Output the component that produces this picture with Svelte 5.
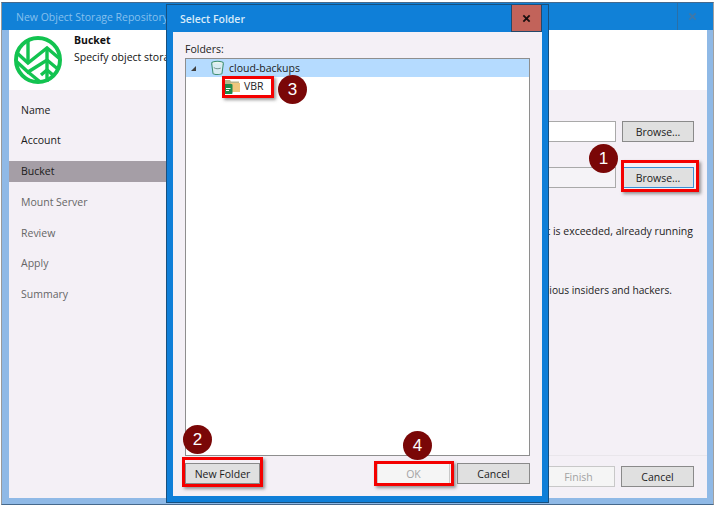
<script>
  const steps = [
    { label: 'Name', done: true },
    { label: 'Account', done: true },
    { label: 'Bucket', done: true, active: true },
    { label: 'Mount Server' },
    { label: 'Review' },
    { label: 'Apply' },
    { label: 'Summary' }
  ];
</script>

<div class="stage">
  <section class="wizard">
    <header class="titlebar">
      <span class="wiz-title">New Object Storage Repository</span>
      <span class="wiz-close">
        <svg viewBox="0 0 10 10" aria-hidden="true"><path d="M1.5 1.5l7 7M8.5 1.5l-7 7" stroke="#3f78a8" stroke-width="2" fill="none" /></svg>
      </span>
    </header>
    <div class="banner">
      <svg class="logo" viewBox="0 0 48 48" aria-hidden="true">
        <circle cx="24" cy="24" r="22" fill="#fff" />
        <g fill="none" stroke="#12c350" stroke-width="3.4">
          <path d="M14 3v24" />
          <path d="M2 16l12 11L33 12l13 11" />
          <path d="M3 26l11 10 19-12 12 10" />
          <path d="M33 12v34" />
          <path d="M14 36l11 9" />
          <path d="M27 39l6-5 6 5" />
        </g>
        <circle cx="24" cy="24" r="22" fill="none" stroke="#12c350" stroke-width="4" />
      </svg>
      <div class="banner-text">
        <strong>Bucket</strong>
        <span>Specify object stora</span>
      </div>
    </div>
    <div class="body">
      <nav class="steps">
        {#each steps as s}
          <div class="step" class:done={s.done} class:active={s.active}>{s.label}</div>
        {/each}
      </nav>
      <div class="panel">
        <div class="row first"><div class="field"></div><button class="btn">Browse...</button></div>
        <div class="row second">
          <div class="field"></div>
          <button class="btn focus">Browse...</button>
        </div>
        <p class="note one">t is exceeded, already running</p>
        <p class="note two">ious insiders and hackers.</p>
        <div class="spacer"></div>
        <footer class="wiz-foot">
          <button class="btn off">Finish</button>
          <button class="btn">Cancel</button>
        </footer>
      </div>
    </div>
  </section>

  <section class="dialog">
    <header class="dlg-bar">
      <span class="dlg-title">Select Folder</span>
      <span class="dlg-close">
        <svg viewBox="0 0 10 10" aria-hidden="true"><path d="M1.5 1.5l7 7M8.5 1.5l-7 7" stroke="#1a0f0f" stroke-width="2" fill="none" /></svg>
      </span>
    </header>
    <div class="dlg-body">
      <div class="dlg-label">Folders:</div>
      <div class="tree">
        <div class="tree-row sel">
          <svg class="caret" viewBox="0 0 6 6" aria-hidden="true"><path d="M6 0v6H0z" fill="#404040" /></svg>
          <svg class="bucket" viewBox="0 0 16 17" aria-hidden="true">
            <ellipse cx="8" cy="3.5" rx="6.3" ry="2.3" fill="#e9f5ee" stroke="#3f8f73" stroke-width="1.1" />
            <path d="M1.8 3.8l1.4 10.5c.5 1.6 9 1.6 9.6 0l1.4-10.5" fill="#d9ecf2" stroke="#3f8f73" stroke-width="1.1" />
            <path d="M4 8c2 1.6 5 1.6 7.5.6" stroke="#6b8f88" fill="none" />
          </svg>
          <span>cloud-backups</span>
        </div>
        <div class="tree-row child">
          <svg class="folder" viewBox="0 0 16 15" aria-hidden="true">
            <path d="M1 1h5l1 1.5h8V13H1z" fill="#b9b58a" />
            <path d="M7 4h9v9H7z" fill="#eec77e" />
            <rect x="0" y="5" width="8.5" height="10" rx="1" fill="#1f8a4c" />
            <path d="M2 9.5h4.5M2 11.5h3" stroke="#fff" stroke-width="1" />
          </svg>
          <span>VBR</span>
        </div>
      </div>
      <div class="dlg-foot">
        <button class="btn new">New Folder</button>
        <div class="dlg-actions">
          <button class="btn off ok">OK</button>
          <button class="btn">Cancel</button>
        </div>
      </div>
    </div>
  </section>

  <div class="mark" style="left:621px;top:160px;width:72px;height:26px"></div>
  <div class="mark" style="left:182px;top:457px;width:75px;height:24px"></div>
  <div class="mark" style="left:374px;top:461px;width:74px;height:19px"></div>
  <div class="mark" style="left:222px;top:76px;width:46px;height:16px"></div>

  <div class="badge" style="left:589px;top:144px">1</div>
  <div class="badge" style="left:183px;top:425px">2</div>
  <div class="badge" style="left:278px;top:75px">3</div>
  <div class="badge" style="left:403px;top:431px">4</div>
</div>

<style>
  :global(body) { margin: 0; background: #fff; }
  .stage {
    position: relative;
    width: 716px;
    height: 507px;
    overflow: hidden;
    font-family: "Open Sans", "Noto Sans", sans-serif;
    font-size: 10.5px;
    color: #1c1c1c;
  }
  .wizard {
    position: absolute;
    left: 1px;
    top: 2px;
    width: 713px;
    height: 503px;
    box-sizing: border-box;
    border: 1px solid #46698c;
    border-left-color: #9a9a9a;
    border-right-color: #a0a0a0;
    background: #8fb9e6;
    padding: 0 6px 6px 7px;
    display: flex;
    flex-direction: column;
  }
  .titlebar {
    margin: 0 -6px 0 -7px;
    height: 27px;
    flex: none;
    background: #1181d7;
    display: flex;
    align-items: center;
    justify-content: space-between;
    padding-left: 14px;
  }
  .wiz-title { color: #86c0ee; font-size: 10.5px; white-space: nowrap; }
  .wiz-close {
    width: 30px;
    height: 27px;
    display: flex;
    align-items: center;
    justify-content: center;
    margin-right: 6px;
    border-left: 1px solid #2a6fa8;
    box-sizing: border-box;
  }
  .wiz-close svg { width: 9px; height: 9px; }
  .banner {
    height: 60px;
    flex: none;
    background: #fff;
    display: flex;
    align-items: flex-start;
    gap: 12px;
    padding: 3px 0 0 5px;
    box-sizing: border-box;
  }
  .logo { width: 48px; height: 48px; flex: none; margin-top: 3px; }
  .banner-text {
    display: flex;
    flex-direction: column;
    gap: 3px;
    white-space: nowrap;
    line-height: 14px;
    color: #111;
  }
  .banner-text strong { font-weight: 700; font-size: 10.5px; }
  .body { flex: 1; min-height: 0; display: flex; background: #f4f0f6; }
  .steps {
    width: 157px;
    flex: none;
    padding-top: 9px;
    box-sizing: border-box;
  }
  .step {
    height: 21px;
    margin-bottom: 9.8px;
    display: flex;
    align-items: center;
    padding-left: 12px;
    color: #666;
  }
  .step.done { color: #1a1a1a; }
  .step.active { background: #a59ea6; }
  .panel {
    flex: 1;
    min-width: 0;
    display: flex;
    flex-direction: column;
  }
  .row {
    display: flex;
    justify-content: flex-end;
    gap: 6px;
    padding-right: 13px;
    height: 21px;
  }
  .row.first { margin-top: 31px; }
  .row.second { margin-top: 25px; }
  .row .btn { width: 72px; }
  .field {
    width: 180px;
    border: 1px solid #a9a9a9;
    background: #fff;
    box-sizing: border-box;
  }
  .row.second .field { background: #f5f3f7; }
  .btn {
    width: 73px;
    height: 21px;
    padding: 0;
    box-sizing: border-box;
    border: 1px solid #8a8a8a;
    background: #e0e0e0;
    font: inherit;
    color: #1c1c1c;
    flex: none;
  }
  .btn.focus { border-color: #3b8ed0; box-shadow: inset 0 0 0 1px #d8e4ee; }
  .btn.off { background: #f5f5f5; border-color: #c8c8c8; color: #a3a3a3; }
  .note {
    margin: 0;
    line-height: 14px;
    white-space: nowrap;
    align-self: flex-end;
  }
  .note.one { margin-top: 36px; margin-right: 14px; }
  .note.two { margin-top: 45px; margin-right: 35px; font-size: 10.2px; }
  .spacer { flex: 1; }
  .wiz-foot {
    flex: none;
    height: 43px;
    border-top: 1px solid #e9e6eb;
    display: flex;
    justify-content: flex-end;
    align-items: flex-start;
    gap: 6px;
    padding: 10px 13px 0 0;
    box-sizing: border-box;
  }

  .dialog {
    position: absolute;
    left: 166px;
    top: 4px;
    width: 383px;
    height: 499px;
    box-sizing: border-box;
    border: 1px solid #17507f;
    background: #0f7fd8;
    padding: 0 6px 6px;
    display: flex;
    flex-direction: column;
  }
  .dlg-bar {
    height: 27px;
    flex: none;
    margin: 0 -6px;
    display: flex;
    align-items: center;
    justify-content: space-between;
    padding-left: 13px;
  }
  .dlg-title { color: #d9ebf9; font-size: 10.5px; font-weight: 600; }
  .dlg-close {
    width: 31px;
    height: 27px;
    margin-right: 6px;
    box-sizing: border-box;
    background: #c2635a;
    border: 1px solid #23486a;
    border-top: 0;
    display: flex;
    align-items: center;
    justify-content: center;
  }
  .dlg-close svg { width: 9px; height: 9px; }
  .dlg-body {
    flex: 1;
    min-height: 0;
    background: #f4f0f6;
    display: flex;
    flex-direction: column;
    padding: 10px 12px 12px 12px;
  }
  .dlg-label { line-height: 14px; height: 16px; }
  .tree {
    flex: 1;
    min-height: 0;
    background: #fff;
    border: 1px solid #8e8e8e;
  }
  .tree-row {
    height: 18px;
    display: flex;
    align-items: center;
    white-space: nowrap;
  }
  .tree-row.sel { background: #b5dbff; padding-left: 5px; }
  .caret { width: 5px; height: 5px; margin-right: 14px; }
  .bucket { width: 15px; height: 16px; margin-right: 4px; flex: none; }
  .tree-row.child { padding-left: 38px; }
  .folder { width: 16px; height: 15px; margin-right: 4px; flex: none; }
  .dlg-foot {
    flex: none;
    display: flex;
    justify-content: space-between;
    align-items: flex-end;
    padding-top: 7px;
  }
  .btn.new { width: 75px; }
  .dlg-actions { display: flex; gap: 7px; }

  .mark {
    position: absolute;
    border: 3px solid #f40000;
    box-shadow: 2px 2px 3px rgba(70, 70, 70, 0.55);
    pointer-events: none;
  }
  .badge {
    position: absolute;
    width: 29px;
    height: 29px;
    border-radius: 50%;
    background: #7a0707;
    color: #fff;
    font-size: 17px;
    line-height: 29px;
    text-align: center;
    font-family: "Liberation Sans", sans-serif;
  }
</style>
